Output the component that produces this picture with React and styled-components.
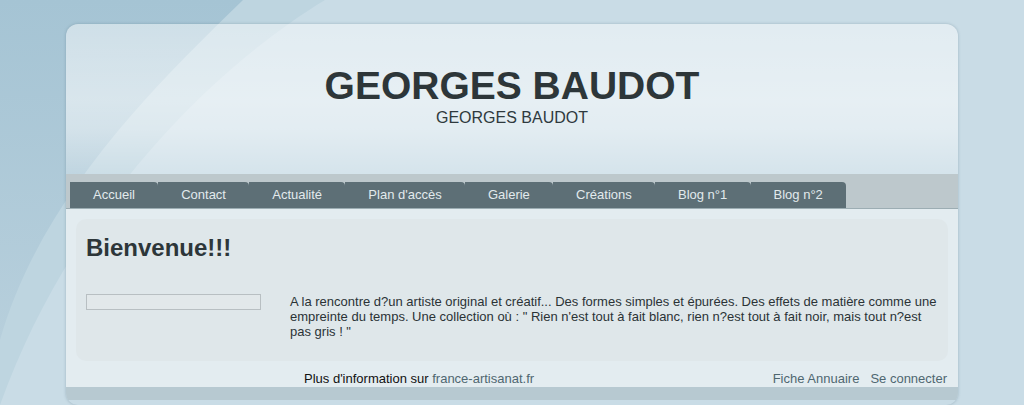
import React from "react";
import styled, { createGlobalStyle } from "styled-components";

const GlobalStyle = createGlobalStyle`
  html, body { margin: 0; padding: 0; }
  body {
    background: #c9dce6;
    font-family: "Liberation Sans", Arial, sans-serif;
  }
`;

const Page = styled.div`
  position: relative;
  min-height: 405px;
  padding-top: 24px;
  box-sizing: border-box;
  display: flex;
  justify-content: center;
  overflow: hidden;
`;

const Backdrop = styled.svg`
  position: absolute;
  inset: 0;
  width: 1024px;
  height: 405px;
  z-index: 0;
`;

const Card = styled.div`
  position: relative;
  z-index: 1;
  width: 892px;
  border-radius: 12px;
  overflow: hidden;
  box-shadow: 0 0 3px rgba(70, 100, 115, 0.35);
  display: flex;
  flex-direction: column;
`;

const Header = styled.header`
  height: 150px;
  box-sizing: border-box;
  padding-top: 40px;
  text-align: center;
  color: #2d3639;
  background: linear-gradient(
    to bottom,
    rgba(255, 255, 255, 0.46) 0%,
    rgba(255, 255, 255, 0.55) 50%,
    rgba(255, 255, 255, 0.48) 70%,
    rgba(255, 255, 255, 0.22) 100%
  );
`;

const Title = styled.h1`
  margin: 0;
  font-size: 39px;
  line-height: 44px;
  font-weight: bold;
`;

const Subtitle = styled.div`
  margin-top: 1px;
  font-size: 16px;
  line-height: 18px;
  color: #2f3a3e;
`;

const Nav = styled.nav`
  display: flex;
  align-items: flex-end;
  padding: 8px 0 0 4px;
  background: #bdc8cc;
  border-bottom: 1px solid #9cadb3;
`;

const Tab = styled.a`
  display: block;
  height: 26px;
  line-height: 26px;
  padding: 0 23.25px 0 23px;
  font-size: 13px;
  color: #e2eaed;
  background: #5d6f76;
  border-top-right-radius: 4px;
  text-decoration: none;
  white-space: nowrap;
`;

const Content = styled.main`
  background: #e3ecf0;
  padding: 10px 10px 0;
`;

const Panel = styled.section`
  background: #dfe7ea;
  border-radius: 10px;
  padding: 15px 10px 22px;
`;

const Heading = styled.h2`
  margin: 0;
  font-size: 24px;
  line-height: 28px;
  font-weight: bold;
  color: #2d3639;
`;

const Row = styled.div`
  display: flex;
  align-items: flex-start;
  gap: 29px;
  margin-top: 32px;
`;

const ImageBox = styled.div`
  flex: 0 0 auto;
  width: 173px;
  height: 14px;
  border: 1px solid #b8bfc2;
  background: #e2e8ea;
`;

const Text = styled.p`
  flex: 1;
  margin: 0;
  font-size: 13px;
  line-height: 15px;
  color: #2b3336;
`;

const Footer = styled.footer`
  height: 26px;
  box-sizing: border-box;
  padding: 10px 11px 0 238px;
  display: flex;
  justify-content: space-between;
  font-size: 13px;
  line-height: 15px;
  background: #e3ecf0;
`;

const Info = styled.div`
  color: #111;
`;

const Link = styled.a`
  color: #4f6770;
  text-decoration: none;
`;

const Links = styled.div`
  display: flex;
  gap: 11px;
`;

const BottomBar = styled.div`
  height: 13px;
  background: #b7c9d1;
`;

const tabs = [
  "Accueil",
  "Contact",
  "Actualité",
  "Plan d'accès",
  "Galerie",
  "Créations",
  "Blog n°1",
  "Blog n°2",
];

export default function App() {
  return (
    <>
      <GlobalStyle />
      <Page>
        <Backdrop viewBox="0 0 1024 405" aria-hidden="true">
          <defs>
            <linearGradient id="dark" x1="0" y1="0" x2="0" y2="1">
              <stop offset="0" stopColor="#a5c4d4" />
              <stop offset="1" stopColor="#b7cfdc" />
            </linearGradient>
          </defs>
          <rect width="1024" height="405" fill="#c9dce6" />
          <path d="M0,0 L325,0 C 210,70 70,210 0,405 Z" fill="#bed5e0" />
          <path d="M0,0 L243,0 C 150,90 40,200 0,340 Z" fill="url(#dark)" />
        </Backdrop>
        <Card>
          <Header>
            <Title>GEORGES BAUDOT</Title>
            <Subtitle>GEORGES BAUDOT</Subtitle>
          </Header>
          <Nav>
            {tabs.map((t) => (
              <Tab key={t} href="#">
                {t}
              </Tab>
            ))}
          </Nav>
          <Content>
            <Panel>
              <Heading>Bienvenue!!!</Heading>
              <Row>
                <ImageBox />
                <Text>
                  A la rencontre d?un artiste original et créatif... Des formes
                  simples et épurées. Des effets de matière comme une empreinte
                  du temps. Une collection où : " Rien n'est tout à fait blanc,
                  rien n?est tout à fait noir, mais tout n?est pas gris ! "
                </Text>
              </Row>
            </Panel>
          </Content>
          <Footer>
            <Info>
              Plus d'information sur <Link href="#">france-artisanat.fr</Link>
            </Info>
            <Links>
              <Link href="#">Fiche Annuaire</Link>
              <Link href="#">Se connecter</Link>
            </Links>
          </Footer>
          <BottomBar />
        </Card>
      </Page>
    </>
  );
}
